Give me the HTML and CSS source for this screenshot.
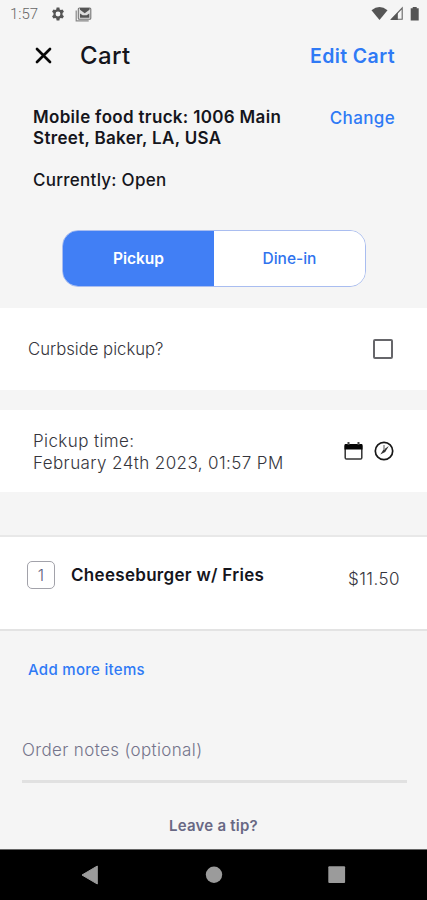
FILE: index.html
```html
<!DOCTYPE html>
<html lang="en">
<head>
<meta charset="utf-8">
<meta name="viewport" content="width=device-width, initial-scale=1">
<title>Cart</title>
<link rel="stylesheet" href="styles.css">
</head>
<body>
<div class="status">
  <span class="clock">1:57</span>
  <svg class="gear" width="14" height="14" viewBox="0 0 24 24"><path fill="#555" fill-rule="evenodd" d="M9.600 1h4.800l.6 3.100 1.800 1 3-1 2.400 4.100-2.400 2.100v3.400l2.400 2.100-2.400 4.100-3-1-1.800 1-.6 3.100H9.600l-.6-3.100-1.800-1-3 1-2.400-4.100 2.400-2.100v-3.400L1.800 8.200l2.400-4.100 3 1 1.800-1zM12 7.800a4.200 4.200 0 1 0 0 8.400 4.200 4.200 0 0 0 0-8.400z"/></svg>
  <svg class="shot" width="17" height="15" viewBox="0 0 17 15"><path d="M1.200 3.500v10.300h12.500" fill="none" stroke="#888" stroke-width="1.200"/><rect x="3.300" y="1" width="12.500" height="11.300" rx="1" fill="#ddd" stroke="#777" stroke-width="1.100"/><path d="M5 1h9.500v1.800L9.700 6.300 5 2.800zM5 10.800V6.500l2.700 1.700h4l2.600-1.700v4.300z" fill="#555"/></svg>
  <span class="spacer"></span>
  <svg width="49" height="16" viewBox="0 0 49 16"><path d="M.5 4.200Q8.500-2 16.500 4.200L8.500 14z" fill="#555"/><path d="M31.200 2v11.300H20.500z" fill="#f5f5f5" stroke="#666" stroke-width="1.100"/><path d="M26.800 6.500V14h-7.500z" fill="#555"/><path d="M39.700 2.300h2V1h4v1.300h2V14.500h-8z" fill="#555"/></svg>
</div>
<header class="header">
  <svg class="close" width="17" height="17" viewBox="0 0 17 17"><path d="M2 2l13 13M15 2 2 15" stroke="#080808" stroke-width="2.700" stroke-linecap="round"/></svg>
  <h1>Cart</h1>
  <a class="edit">Edit Cart</a>
</header>
<section class="location">
  <div class="address"><b>Mobile food truck: 1006 Main<br>Street, Baker, LA, USA</b><p>Currently: Open</p></div>
  <a class="change">Change</a>
</section>
<div class="toggle"><button class="on">Pickup</button><button>Dine-in</button></div>
<section class="card curbside"><span>Curbside pickup?</span><i class="check"></i></section>
<section class="card time">
  <p>Pickup time:<br>February 24th 2023, 01:57 PM</p>
  <svg width="19" height="20" viewBox="0 0 19 20"><rect x="1.200" y="4" width="16.600" height="14" rx="1.300" fill="#fff" stroke="#333" stroke-width="1.500"/><path d="M.5 4q0-1 1-1h16q1 0 1 1v4.500H.5z" fill="#050505"/><path d="M4.500 1v3M14.500 1v3" stroke="#444" stroke-width="2"/></svg>
  <svg class="dial" width="20" height="20" viewBox="0 0 20 20"><circle cx="10" cy="10" r="8.700" fill="none" stroke="#181818" stroke-width="1.700"/><path d="M6.300 13.400 9.200 9 14.800 5.100 11.200 11z" fill="#333"/><path d="M10 4v5" stroke="#999" stroke-width="1.600"/></svg>
</section>
<section class="item"><span class="qty">1</span><b>Cheeseburger w/ Fries</b><span class="price">$11.50</span></section>
<a class="more">Add more items</a>
<div class="notes">Order notes (optional)</div>
<div class="tip">Leave a tip?</div>
<nav class="nav">
  <svg width="427" height="50" viewBox="0 0 427 50"><path d="M97.300 16v18L82 25z" fill="#9b9b9b" stroke="#9b9b9b" stroke-linejoin="round"/><circle cx="214" cy="24.700" r="8.200" fill="#9b9b9b"/><rect x="328.300" y="16.300" width="16.800" height="16.800" rx="1" fill="#9b9b9b"/></svg>
</nav>
</body>
</html>
```
FILE: styles.css
```css
* { box-sizing: border-box; }
body { margin: 0; width: 427px; height: 900px; overflow: hidden; background: #f5f5f5; color: #15151c; font-family: Inter, "Liberation Sans", sans-serif; display: flex; flex-direction: column; }
h1, p { margin: 0; }
svg { display: block; flex: none; }
.status { height: 28px; display: flex; align-items: center; padding: 0 7px 0 10px; }
.clock { font: 300 15px/28px Roboto, sans-serif; color: #666; width: 41px; }
.gear { margin-right: 10px; }
.spacer { flex: 1; }
.header { height: 55px; display: flex; align-items: center; padding: 0 32px 0 35px; }
.header h1 { font-size: 24px; font-weight: 500; margin-left: 28px; flex: 1; letter-spacing: .4px; }
.edit, .change, .more { color: #2f7af5; }
.edit { font-size: 19.500px; font-weight: 600; letter-spacing: .4px; }
.location { height: 147px; padding: 24px 32px 0 33px; display: flex; justify-content: space-between; font-size: 17px; line-height: 21.300px; }
.address { letter-spacing: .32px; }
.address b { font-weight: 600; }
.address p { margin-top: 20px; font-weight: 500; letter-spacing: .27px; }
.change { padding-top: 1px; font-size: 17px; font-weight: 500; letter-spacing: .35px; }
.toggle { width: 304px; height: 57px; margin-left: 62px; display: flex; border: 1px solid #a9bdf0; border-radius: 16px; overflow: hidden; flex: none; }
.toggle button { flex: 1; border: 0; padding: 0; background: #fff; color: #2f73ee; font: 500 15.500px Inter, sans-serif; }
.toggle .on { background: #417ff5; color: #fff; font-weight: 600; }
.card { background: #fff; height: 82px; display: flex; align-items: center; color: #35353c; font-size: 17px; font-weight: 300; flex: none; }
.curbside { margin-top: 21px; padding: 0 34px 0 28px; justify-content: space-between; font-size: 16.700px; }
.check { width: 20px; height: 20px; border: 2px solid #66666a; border-radius: 2px; }
.time { margin-top: 20px; padding: 0 33px 0 33px; line-height: 21.300px; }
.time p { flex: 1; padding-top: 3px; letter-spacing: .4px; }
.dial { margin-left: 11px; }
.item { height: 96px; margin-top: 43px; background: #fff; border-top: 2px solid #e8e8e8; border-bottom: 2px solid #e3e3e3; padding: 0 27px; display: flex; flex: none; }
.qty { width: 28px; height: 28px; margin-top: 24px; border: 1px solid #a2a2aa; border-radius: 5px; text-align: center; font-size: 16px; line-height: 27px; font-weight: 300; color: #60607c; }
.item b { margin: 28px 0 0 16px; font-size: 17px; line-height: 20px; font-weight: 600; letter-spacing: .3px; flex: 1; }
.price { margin-top: 32px; font-size: 17px; line-height: 20px; font-weight: 300; letter-spacing: .45px; color: #35353c; }
.more { height: 20px; margin: 29px 0 0 28px; font-size: 15px; line-height: 20px; font-weight: 500; letter-spacing: .3px; }
.notes { margin: 60px 20px 0 22px; height: 43px; border-bottom: 3px solid #e1e1e1; font-size: 17px; line-height: 20px; font-weight: 300; letter-spacing: .36px; color: #74748b; }
.tip { margin-top: 33px; height: 20px; text-align: center; font-size: 15px; line-height: 20px; font-weight: 600; letter-spacing: .22px; color: #686884; }
.nav { height: 51px; margin-top: auto; background: #000; border-top: 1px solid #666; flex: none; }
```
